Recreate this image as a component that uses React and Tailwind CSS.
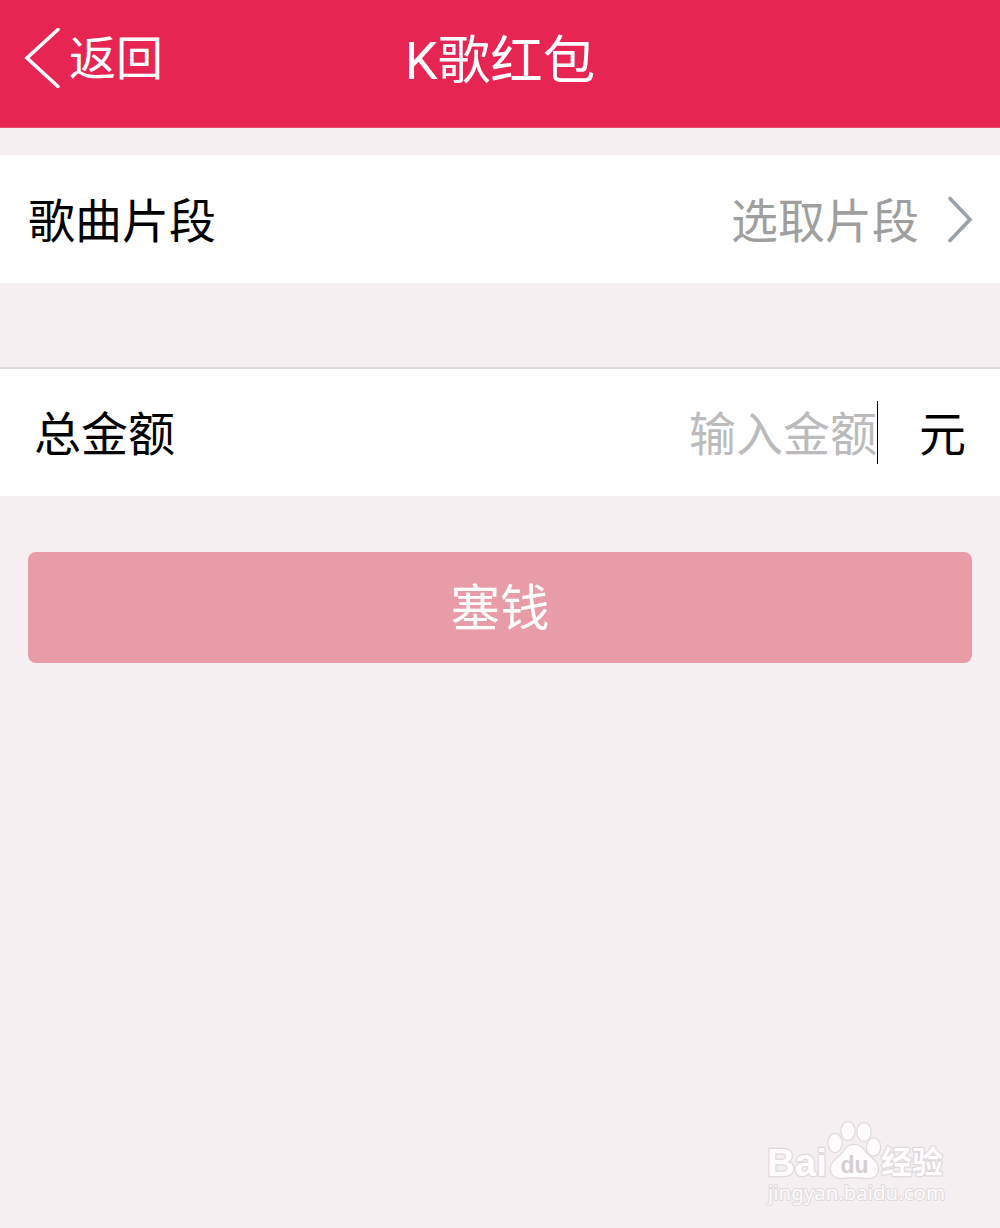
import React from "react";

const Watermark = () => {
  return (
    <svg
      className="absolute right-[48px] bottom-[10px] font-['Liberation_Sans','Noto_Sans_CJK_SC',sans-serif]"
      width="192"
      height="102"
      viewBox="0 0 192 102"
      fill="#fdfbfc"
      stroke="#dfd9db"
      strokeWidth="2.5"
      strokeLinejoin="round"
      paintOrder="stroke"
    >
      <text x="7" y="60" fontSize="38" fontWeight="700" textLength="60" lengthAdjust="spacingAndGlyphs">
        Bai
      </text>
      {/* 腳印 */}
      <ellipse cx="75" cy="27" rx="6.5" ry="9" />
      <ellipse cx="88" cy="15" rx="6.5" ry="9" />
      <ellipse cx="104" cy="16" rx="6.5" ry="9" />
      <ellipse cx="113.500" cy="31" rx="6.500" ry="8.500" />
      <path d="M94 29c6 0 9 4 12 8 4 5 12 8 12 16 0 7-5 9-12 9-5 0-7-1-12-1s-8 1-13 1c-6 0-10-4-10-9 0-7 6-10 11-15 3-5 6-9 12-9z" />
      <text
        x="80.500"
        y="57"
        fontSize="24"
        fontWeight="700"
        fill="#d5ced1"
        stroke="none"
        textLength="28"
        lengthAdjust="spacingAndGlyphs"
      >
        du
      </text>
      <text x="121" y="57" fontSize="31" fontWeight="700" textLength="62" lengthAdjust="spacingAndGlyphs">
        经验
      </text>
      <text
        x="8"
        y="84"
        fontSize="19"
        strokeWidth="2"
        className="font-['Noto_Sans',sans-serif]"
        textLength="177"
        lengthAdjust="spacingAndGlyphs"
      >
        jingyan.baidu.com
      </text>
    </svg>
  );
};

const App = () => {
  return (
    <div className="relative h-[1228px] w-[1000px] overflow-hidden bg-[#f5eff1] font-['Noto_Sans_CJK_SC',sans-serif] text-[47px] leading-none text-black">
      {/* 頂部導航 */}
      <header className="grid h-32 grid-cols-[1fr_auto_1fr] border-b border-[#ea4a70] bg-[#e72553] text-white">
        <button className="flex h-[116px] items-center pl-6">
          <svg width="36" height="60" viewBox="0 0 36 60" fill="none" stroke="currentColor" strokeWidth="3.6">
            <path d="M34 1.500L3 30L34 58.500" strokeLinecap="round" />
          </svg>
          <span className="ml-[9px] pb-2">返回</span>
        </button>
        <h1 className="flex h-[123px] items-center font-[Roboto,'Noto_Sans_CJK_SC',sans-serif] text-[52.5px]">
          K歌红包
        </h1>
      </header>

      {/* 歌曲片段 */}
      <section className="mt-[27px] flex h-[128px] items-center bg-white pr-[27px] pl-7">
        <span className="pb-1">歌曲片段</span>
        <span className="ml-auto pb-1 text-[#9f9f9f]">选取片段</span>
        <svg
          className="ml-7"
          width="26"
          height="48"
          viewBox="0 0 26 48"
          fill="none"
          stroke="#98a2aa"
          strokeWidth="3.6"
        >
          <path d="M3 3.500L23 24.500L3 45.500" strokeLinecap="round" />
        </svg>
      </section>

      {/* 總金額 */}
      <section className="mt-[84px] flex h-[129px] items-center border-t-2 border-[#dfdadc] bg-white pr-[34px] pl-[34px]">
        <span className="pb-1">总金额</span>
        <span className="ml-auto pb-1 text-[#bbbbbb]">输入金额</span>
        <span className="h-[63px] w-px bg-black" />
        <span className="ml-[41px] pb-1">元</span>
      </section>

      <button className="mx-7 mt-[56px] flex h-[111px] w-[944px] items-center justify-center rounded-lg bg-[#e89ca8] pb-[5px] text-[49.5px] text-white">
        塞钱
      </button>

      <Watermark />
    </div>
  );
};

export default App;
